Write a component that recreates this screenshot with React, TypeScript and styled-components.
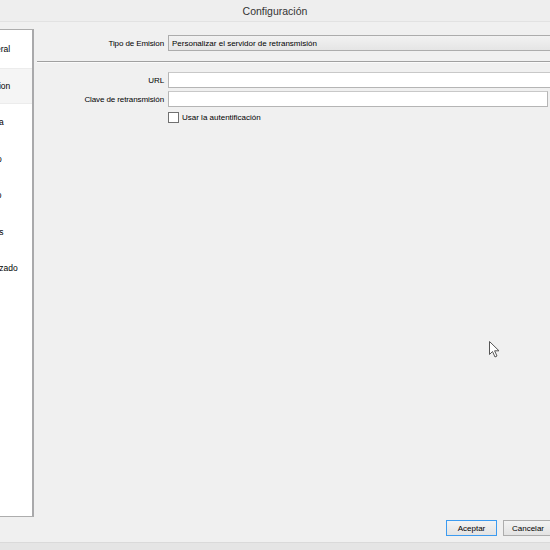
import { FC } from 'react';
import styled, { createGlobalStyle } from 'styled-components';

const GlobalStyle = createGlobalStyle`
  html, body {
    margin: 0;
    padding: 0;
    background: #f0f0f0;
  }
  body {
    font-family: "Liberation Sans", Arial, sans-serif;
    color: #000;
  }
`;

const sections = ['General', 'Emision', 'Salida', 'Audio', 'Video', 'Atajos', 'Avanzado'];

const App: FC = () => {
  return (
    <>
      <GlobalStyle />
      <Window>
        <TitleBar>Configuración</TitleBar>
        <Body>
          <Sidebar>
            {sections.map((name) => (
              <SideItem key={name} $selected={name === 'Emision'}>
                {name}
              </SideItem>
            ))}
          </Sidebar>
          <Content>
            <Row $top={6}>
              <Label>Tipo de Emision</Label>
              <Combo>Personalizar el servidor de retransmisión</Combo>
            </Row>
            <Separator />
            <Row $top={9}>
              <Label>URL</Label>
              <Input $width={400} />
            </Row>
            <Row $top={3}>
              <Label>Clave de retransmisión</Label>
              <Input $width={380} />
            </Row>
            <Row $top={5}>
              <span />
              <CheckRow>
                <CheckBox />
                <span>Usar la autentificación</span>
              </CheckRow>
            </Row>
          </Content>
        </Body>
        <Footer>
          <Button $default>Aceptar</Button>
          <Button>Cancelar</Button>
        </Footer>
        <BottomStrip />
        <Cursor width="11" height="17" viewBox="0 0 11 17">
          <path d="M0.5 0.5 L0.5 13.5 L3.5 10.5 L6 16 L8 15 L5.6 9.8 L10 9.8 Z" fill="#fff" stroke="#555" strokeWidth="1" strokeLinejoin="round" />
        </Cursor>
      </Window>
    </>
  );
};

export default App;

const Window = styled.div`
  position: relative;
  width: 550px;
  height: 550px;
  display: flex;
  flex-direction: column;
  overflow: hidden;
  background: #f0f0f0;
`;

const TitleBar = styled.div`
  height: 21px;
  display: flex;
  align-items: center;
  justify-content: center;
  background: #eeeeee;
  border-bottom: 1px solid #e2e2e2;
  font-size: 10.5px;
  color: #333;
`;

const Body = styled.div`
  flex: 1;
  display: flex;
  padding-top: 7px;
  min-height: 0;
`;

const Sidebar = styled.div`
  width: 32px;
  height: 485px;
  flex-shrink: 0;
  background: #fff;
  border: 1px solid #adadad;
  border-left: none;
  border-right: 2px solid #a9a9ab;
  padding-top: 1px;
  overflow: hidden;
`;

const SideItem = styled.div<{ $selected?: boolean }>`
  height: 36.5px;
  box-sizing: border-box;
  display: flex;
  align-items: center;
  font-size: 8.5px;
  white-space: nowrap;
  text-indent: -20px;
  background: ${(p) => (p.$selected ? '#f5f5f5' : 'transparent')};
  border-top: 1px solid ${(p) => (p.$selected ? '#ececec' : 'transparent')};
  border-bottom: 1px solid ${(p) => (p.$selected ? '#ececec' : 'transparent')};
`;

const Content = styled.div`
  width: 560px;
  flex-shrink: 0;
  margin-left: 3px;
  display: flex;
  flex-direction: column;
`;

const Row = styled.div<{ $top: number }>`
  display: grid;
  grid-template-columns: 127px auto;
  column-gap: 4px;
  align-items: center;
  margin-top: ${(p) => p.$top}px;
  font-size: 8px;
`;

const Label = styled.span`
  text-align: right;
  white-space: nowrap;
  letter-spacing: -0.1px;
`;

const Combo = styled.div`
  height: 16px;
  box-sizing: border-box;
  width: 400px;
  display: flex;
  align-items: center;
  padding-left: 3px;
  border: 1px solid #acacac;
  background: linear-gradient(#f2f2f2, #e5e5e5);
  white-space: nowrap;
`;

const Separator = styled.div`
  margin-top: 10px;
  height: 1px;
  background: #a0a0a0;
  border-bottom: 1px solid #fafafa;
`;

const Input = styled.div<{ $width: number }>`
  width: ${(p) => p.$width}px;
  height: 16px;
  box-sizing: border-box;
  background: #fff;
  border: 1px solid #b5b5b5;
  border-top-color: #c8c8c8;
`;

const CheckRow = styled.label`
  display: flex;
  align-items: center;
  gap: 3px;
  white-space: nowrap;
`;

const CheckBox = styled.span`
  width: 11px;
  height: 11px;
  box-sizing: border-box;
  background: #fff;
  border: 1px solid #707070;
`;

const Footer = styled.div`
  display: flex;
  gap: 6px;
  padding-left: 446px;
  padding-bottom: 6px;
`;

const Button = styled.button<{ $default?: boolean }>`
  width: ${(p) => (p.$default ? 51 : 50)}px;
  height: 16px;
  flex-shrink: 0;
  padding: 0;
  font-family: inherit;
  font-size: 8px;
  color: #000;
  background: linear-gradient(#f3f3f3, #e3e3e3);
  border: 1px solid ${(p) => (p.$default ? '#3c9bf0' : '#adadad')};
`;

const BottomStrip = styled.div`
  height: 7px;
  background: #e5e5e5;
  border-top: 1px solid #dadada;
`;

const Cursor = styled.svg`
  position: absolute;
  left: 489px;
  top: 341px;
`;
